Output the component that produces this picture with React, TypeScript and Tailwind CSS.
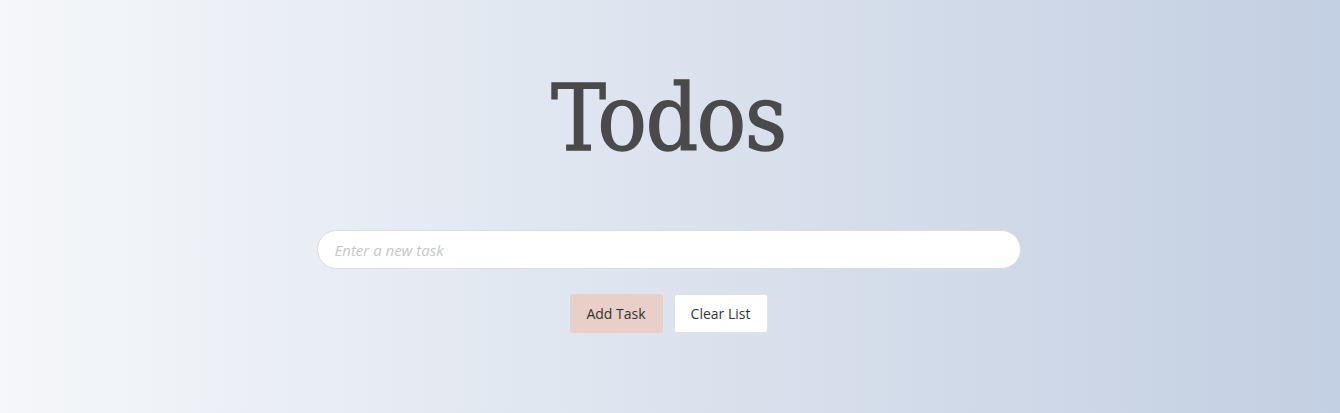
export default function App() {
  return (
    <div className="min-h-[413px] w-full bg-gradient-to-r from-[#f5f7fa] to-[#c3cfe2] flex flex-col items-center pt-[64px] pr-[3px]">
      <h1 className="font-['DejaVu_Serif',serif] font-stretch-condensed text-[91px] leading-[110px] text-[#4a4a4a] tracking-[-1.2px] [-webkit-text-stroke:1.5px_#4a4a4a]">
        Todos
      </h1>
      <div className="mt-[56px] w-[704px]">
        <input
          type="text"
          placeholder="Enter a new task"
          className="w-full h-[39px] rounded-full border border-[#dcdcdc] bg-white px-[17px] font-['Open_Sans',sans-serif] text-[15px] italic text-[#333] placeholder:text-[#c8c8c8] outline-none"
        />
      </div>
      <div className="mt-[25px] flex gap-[11px] font-['Open_Sans',sans-serif] text-[14px] text-[#333]">
        <button className="h-[39px] w-[93px] rounded-[3px] bg-[#e8d0c8]">Add Task</button>
        <button className="h-[39px] w-[94px] rounded-[3px] bg-white border border-[#e2e2e2]">Clear List</button>
      </div>
    </div>
  )
}
